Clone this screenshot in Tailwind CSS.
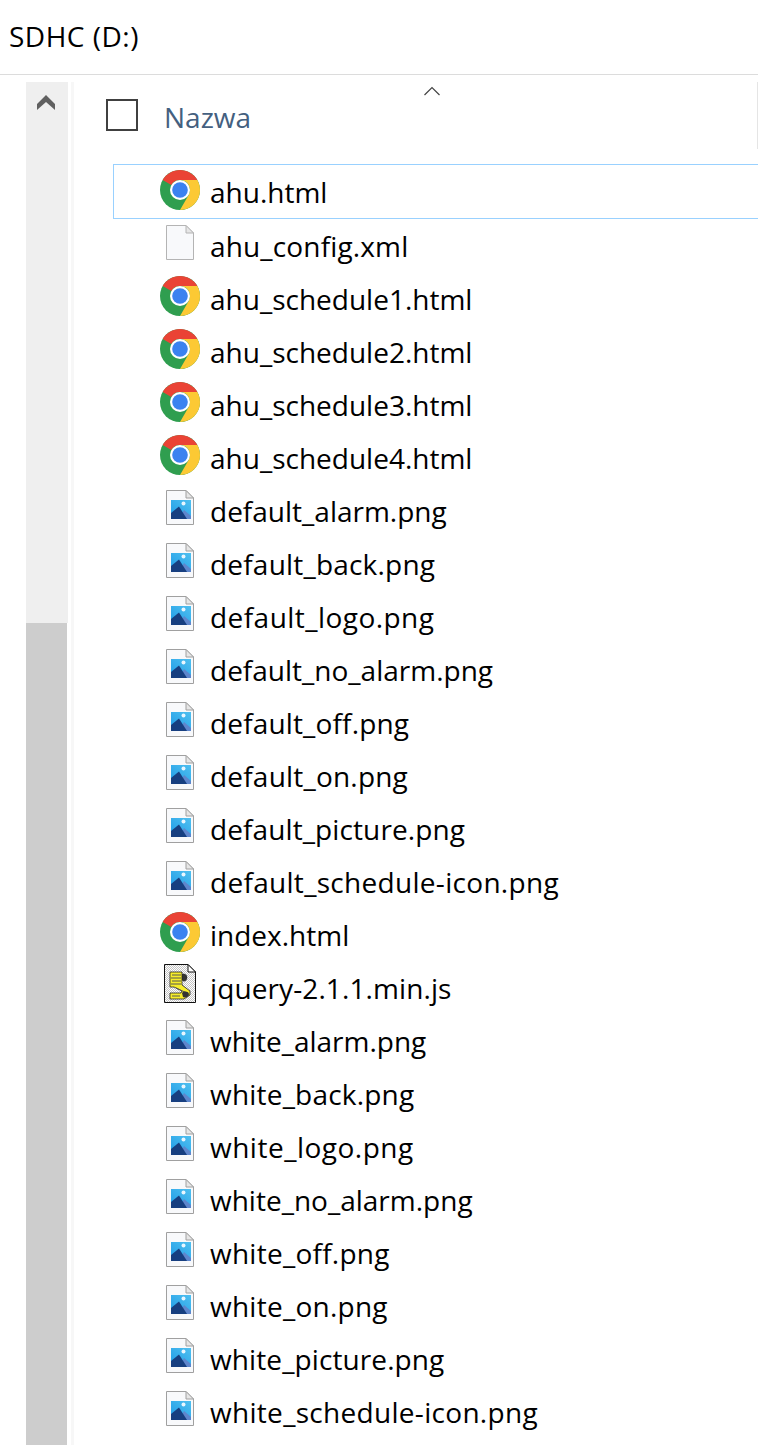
<!DOCTYPE html>
<html lang="en">
<head>
<meta charset="UTF-8">
<script src="https://cdn.jsdelivr.net/npm/@tailwindcss/browser@4"></script>
<title>SDHC (D:)</title>
</head>
<body class="bg-white w-[758px] h-[1445px] overflow-hidden font-['Open_Sans',sans-serif] text-black">
<svg class="absolute w-0 h-0">
  <defs>
    <linearGradient id="sky" x1="0" y1="1" x2="1" y2="0">
      <stop offset="0" stop-color="#1f9be6"/>
      <stop offset="1" stop-color="#4fc0f0"/>
    </linearGradient>
    <pattern id="paper" width="2" height="2" patternUnits="userSpaceOnUse">
      <rect width="2" height="2" fill="#fff"/>
      <rect width="1" height="1" fill="#c4c4c4"/>
      <rect x="1" y="1" width="1" height="1" fill="#c4c4c4"/>
    </pattern>
  </defs>
  <symbol id="chrome" viewBox="0 0 40 40">
    <circle cx="20" cy="20" r="20" fill="#2f9e4f"/>
    <path d="M2.68 10A20 20 0 0 1 37.32 10H20A10 10 0 0 0 11.34 15Z" fill="#ea4335"/>
    <path d="M37.32 10A20 20 0 0 1 20 40L28.66 25A10 10 0 0 0 20 10Z" fill="#fcc934"/>
    <circle cx="20" cy="20" r="10" fill="#fff"/>
    <circle cx="20" cy="20" r="7.8" fill="#3b82f0"/>
  </symbol>
  <symbol id="blank" viewBox="0 0 28 35">
    <path d="M.5 .5H20L27.5 8V34.5H.5Z" fill="#f8f9fb" stroke="#b4b4b4"/>
    <path d="M20 .5V8H27.5Z" fill="#e6e6e6" stroke="#b4b4b4"/>
  </symbol>
  <symbol id="image" viewBox="0 0 28 35">
    <path d="M.5 .5H20L27.5 8V34.5H.5Z" fill="#f8f9fb" stroke="#a0a0a0"/>
    <path d="M20 .5V8H27.5Z" fill="#e6e6e6" stroke="#a0a0a0"/>
    <rect x="5" y="10" width="20" height="19" fill="url(#sky)"/>
    <circle cx="17.5" cy="13.5" r="2" fill="#e8f6ff"/>
    <path d="M13 29L18 20L25 26V29Z" fill="#5f86cc"/>
    <path d="M5 29V23L13 16.5L21 29Z" fill="#173f80"/>
  </symbol>
  <symbol id="script" viewBox="0 0 32 39">
    <path d="M.5 .5H24L31.5 8V38.5H.5Z" fill="url(#paper)" stroke="#111"/>
    <path d="M24 .5V8H31.5Z" fill="#fff" stroke="#111"/>
    <path d="M18 10C22 9 24 12 23 15C22 18 19 18 18 16Z" fill="#333"/>
    <path d="M6 8H18V21L26 27V31L20 35H6V29H17L18 27L10 23H6Z" fill="#f7ee2b" stroke="#222" stroke-width=".8"/>
    <path d="M8 11H17M7 14H17M8 17H17M7 20H17M12 24L23 29M8 32H16" stroke="#555" stroke-width="1"/>
    <path d="M18 29C20 27 24 27 25 30C25 33 21 34 19 33Z" fill="#333"/>
  </symbol>
</svg>

<header class="h-[75px] border-b border-[#dcdcdc] pl-[9px] pt-[17px] text-[28px] leading-[38px] tracking-[0.5px]">SDHC (D:)</header>

<div class="flex">
  <div class="ml-[26px] w-[42px] h-[1370px] mt-[7px] flex flex-col">
    <div class="h-[541px] bg-[#efefef] pt-[12px] pr-[2px] flex justify-center">
      <svg width="18" height="16" viewBox="0 0 18 16"><path d="M0 16V10L9 1L18 10V16L9 8Z" fill="#606060"/></svg>
    </div>
    <div class="flex-1 bg-[#cdcdcd] mr-[1px]"></div>
  </div>
  <div class="w-[3px] ml-[3px] h-[1370px] mt-[7px] bg-[#f7f7f7]"></div>

  <main class="flex-1 relative">
    <svg class="absolute left-[350px] top-[11px]" width="16" height="10" viewBox="0 0 16 10"><path d="M.5 9L8 1.5L15.5 9" fill="none" stroke="#444" stroke-width="1.2"/></svg>
    <div class="absolute right-0 top-[7px] w-px h-[67px] bg-[#e5e5e5]"></div>
    <div class="h-[89px] flex items-start pt-[24px] pl-[32px]">
      <div class="w-[32px] h-[32px] border-[2px] border-[#404040]"></div>
      <span class="ml-[26px] mt-[-1px] text-[28px] leading-[38px] text-[#44607f]">Nazwa</span>
    </div>
    <ul class="ml-[39px] text-[28px] leading-[38px]">
      <li class="h-[55px] mb-[-1px] border border-r-0 border-[#99d1ff] flex items-center pl-[46px]"><svg class="w-[40px] h-[40px] mb-[4px] shrink-0"><use href="#chrome"/></svg><span class="ml-[10px] mt-[1px]">ahu.html</span></li>
      <li class="h-[53px] flex items-center pl-[53px]"><svg class="w-[28px] h-[35px] mb-[4px] shrink-0"><use href="#blank"/></svg><span class="ml-[16px] mt-[2px] tracking-[0.15px]">ahu_config.xml</span></li>
      <li class="h-[53px] flex items-center pl-[47px]"><svg class="w-[40px] h-[40px] mb-[3px] shrink-0"><use href="#chrome"/></svg><span class="ml-[10px] mt-[2px]">ahu_schedule1.html</span></li>
      <li class="h-[53px] flex items-center pl-[47px]"><svg class="w-[40px] h-[40px] mb-[3px] shrink-0"><use href="#chrome"/></svg><span class="ml-[10px] mt-[2px]">ahu_schedule2.html</span></li>
      <li class="h-[53px] flex items-center pl-[47px]"><svg class="w-[40px] h-[40px] mb-[3px] shrink-0"><use href="#chrome"/></svg><span class="ml-[10px] mt-[2px]">ahu_schedule3.html</span></li>
      <li class="h-[53px] flex items-center pl-[47px]"><svg class="w-[40px] h-[40px] mb-[3px] shrink-0"><use href="#chrome"/></svg><span class="ml-[10px] mt-[2px]">ahu_schedule4.html</span></li>
      <li class="h-[53px] flex items-center pl-[53px]"><svg class="w-[28px] h-[35px] mb-[4px] shrink-0"><use href="#image"/></svg><span class="ml-[16px] mt-[2px]">default_alarm.png</span></li>
      <li class="h-[53px] flex items-center pl-[53px]"><svg class="w-[28px] h-[35px] mb-[4px] shrink-0"><use href="#image"/></svg><span class="ml-[16px] mt-[2px] tracking-[0.2px]">default_back.png</span></li>
      <li class="h-[53px] flex items-center pl-[53px]"><svg class="w-[28px] h-[35px] mb-[4px] shrink-0"><use href="#image"/></svg><span class="ml-[16px] mt-[2px] tracking-[0.45px]">default_logo.png</span></li>
      <li class="h-[53px] flex items-center pl-[53px]"><svg class="w-[28px] h-[35px] mb-[4px] shrink-0"><use href="#image"/></svg><span class="ml-[16px] mt-[2px]">default_no_alarm.png</span></li>
      <li class="h-[53px] flex items-center pl-[53px]"><svg class="w-[28px] h-[35px] mb-[4px] shrink-0"><use href="#image"/></svg><span class="ml-[16px] mt-[2px] tracking-[0.15px]">default_off.png</span></li>
      <li class="h-[53px] flex items-center pl-[53px]"><svg class="w-[28px] h-[35px] mb-[4px] shrink-0"><use href="#image"/></svg><span class="ml-[16px] mt-[2px] tracking-[0.2px]">default_on.png</span></li>
      <li class="h-[53px] flex items-center pl-[53px]"><svg class="w-[28px] h-[35px] mb-[4px] shrink-0"><use href="#image"/></svg><span class="ml-[16px] mt-[2px] tracking-[0.1px]">default_picture.png</span></li>
      <li class="h-[53px] flex items-center pl-[53px]"><svg class="w-[28px] h-[35px] mb-[4px] shrink-0"><use href="#image"/></svg><span class="ml-[16px] mt-[2px] tracking-[0.3px]">default_schedule-icon.png</span></li>
      <li class="h-[53px] flex items-center pl-[47px]"><svg class="w-[40px] h-[40px] mb-[3px] shrink-0"><use href="#chrome"/></svg><span class="ml-[10px] mt-[2px]">index.html</span></li>
      <li class="h-[53px] flex items-center pl-[51px]"><svg class="w-[32px] h-[39px] mb-[6px] shrink-0"><use href="#script"/></svg><span class="ml-[14px] mt-[2px] tracking-[0.1px]">jquery-2.1.1.min.js</span></li>
      <li class="h-[53px] flex items-center pl-[53px]"><svg class="w-[28px] h-[35px] mb-[4px] shrink-0"><use href="#image"/></svg><span class="ml-[16px] mt-[2px]">white_alarm.png</span></li>
      <li class="h-[53px] flex items-center pl-[53px]"><svg class="w-[28px] h-[35px] mb-[4px] shrink-0"><use href="#image"/></svg><span class="ml-[16px] mt-[2px] tracking-[0.2px]">white_back.png</span></li>
      <li class="h-[53px] flex items-center pl-[53px]"><svg class="w-[28px] h-[35px] mb-[4px] shrink-0"><use href="#image"/></svg><span class="ml-[16px] mt-[2px] tracking-[0.5px]">white_logo.png</span></li>
      <li class="h-[53px] flex items-center pl-[53px]"><svg class="w-[28px] h-[35px] mb-[4px] shrink-0"><use href="#image"/></svg><span class="ml-[16px] mt-[2px]">white_no_alarm.png</span></li>
      <li class="h-[53px] flex items-center pl-[53px]"><svg class="w-[28px] h-[35px] mb-[4px] shrink-0"><use href="#image"/></svg><span class="ml-[16px] mt-[2px] tracking-[0.25px]">white_off.png</span></li>
      <li class="h-[53px] flex items-center pl-[53px]"><svg class="w-[28px] h-[35px] mb-[4px] shrink-0"><use href="#image"/></svg><span class="ml-[16px] mt-[2px] tracking-[0.25px]">white_on.png</span></li>
      <li class="h-[53px] flex items-center pl-[53px]"><svg class="w-[28px] h-[35px] mb-[4px] shrink-0"><use href="#image"/></svg><span class="ml-[16px] mt-[2px] tracking-[0.1px]">white_picture.png</span></li>
      <li class="h-[53px] flex items-center pl-[53px]"><svg class="w-[28px] h-[35px] mb-[4px] shrink-0"><use href="#image"/></svg><span class="ml-[16px] mt-[2px] tracking-[0.3px]">white_schedule-icon.png</span></li>
    </ul>
  </main>
</div>
</body>
</html>
